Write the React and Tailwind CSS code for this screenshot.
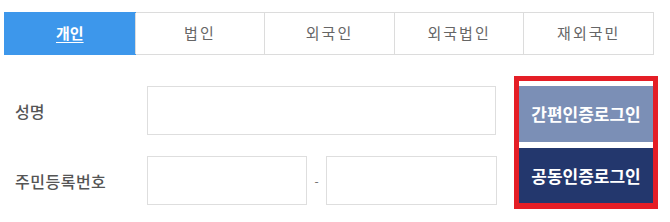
const tabs = ["개인", "법인", "외국인", "외국법인", "재외국민"];

const App = () => {
  return (
    <div
      className="w-[670px] h-[222px] bg-white pl-[4px] pt-[12px]"
      style={{ fontFamily: '"Noto Sans CJK KR", "Noto Sans", sans-serif' }}
    >
      <div className="grid grid-cols-5 w-[650px] h-[43px] border border-[#dcdcdc]">
        {tabs.map((t, i) =>
          i === 0 ? (
            <div
              key={t}
              className="flex items-center justify-center bg-[#3d97eb] text-white text-[15px] font-bold underline underline-offset-[3px] -m-px"
            >
              {t}
            </div>
          ) : (
            <div
              key={t}
              className="flex items-center justify-center border-l border-[#dcdcdc] text-[15px] text-[#666] tracking-[2px]"
            >
              {t}
            </div>
          )
        )}
      </div>

      <div className="flex items-start mt-[21px]">
        <div className="flex flex-col gap-[21px] pt-[10px] pl-[11px]">
          <div className="flex items-center">
            <label className="w-[132px] text-[16px] font-medium text-[#555]">성명</label>
            <input className="w-[349px] h-[49px] border border-[#dedede] outline-none" />
          </div>
          <div className="flex items-center">
            <label className="w-[132px] text-[16px] font-medium text-[#555] tracking-[0.5px]">주민등록번호</label>
            <input className="w-[160px] h-[49px] border border-[#dedede] outline-none" />
            <span className="w-[19px] text-center text-[12px] text-[#666]">-</span>
            <input className="w-[171px] h-[49px] border border-[#dedede] outline-none" />
          </div>
        </div>

        <div className="ml-[17px] w-[144px] border-[5px] border-b-[6px] border-[#e41e26] pt-[5px] flex flex-col gap-[6px] bg-white">
          <button className="h-[56px] bg-[#7b8fb6] text-white text-[17px] font-bold">
            간편인증로그인
          </button>
          <button className="h-[55px] bg-[#23376d] text-white text-[17px] font-bold">
            공동인증로그인
          </button>
        </div>
      </div>
    </div>
  );
};

export default App;
